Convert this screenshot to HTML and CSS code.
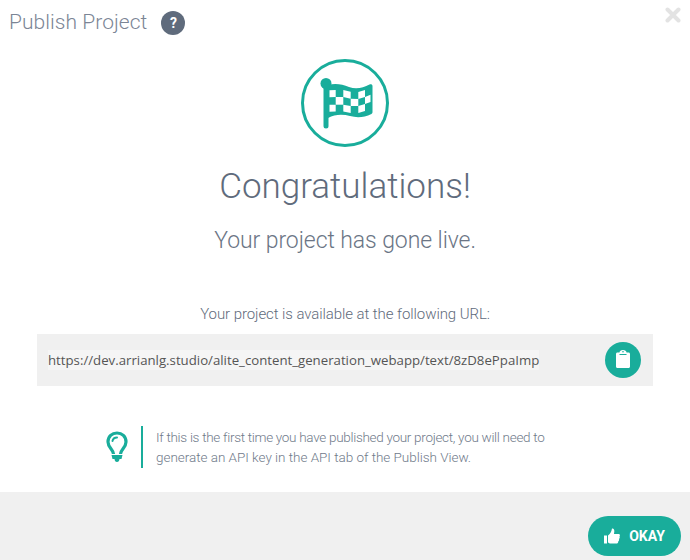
FILE: index.html
```html
<!DOCTYPE html>
<html lang="en">
<head>
    <meta charset="UTF-8">
    <meta name="viewport" content="width=device-width, initial-scale=1.0">
    <title>Publish Project</title>
    <link rel="stylesheet" href="styles.css">
</head>
<body>
    <div class="dialog">
        <div class="dialog-header">
            <h1 class="dialog-title">Publish Project</h1>
            <span class="help-badge">?</span>
            <svg class="close-icon" width="16" height="16" viewBox="0 0 16 16">
                <path d="M2.5 2.5 L13.5 13.5 M13.5 2.5 L2.5 13.5" stroke="#e3e3e3" stroke-width="4" stroke-linecap="round"/>
            </svg>
        </div>

        <div class="dialog-body">
            <svg class="flag-icon" width="88" height="88" viewBox="0 0 88 88">
                <circle cx="44" cy="44" r="42.500" fill="none" stroke="#19ad9b" stroke-width="3"/>
                <path d="M25 27 L25 67" stroke="#19ad9b" stroke-width="5" stroke-linecap="round"/>
                <circle cx="25" cy="24.500" r="5.500" fill="#19ad9b"/>
                <path d="M27 26 C34 24 41 25 48 28 C55 30.500 62 29 68.500 25.500 C70 25 71.500 25.500 71.500 27 L71.500 53 C71.500 54 71 54.500 70.500 55 C63 58.500 56 59 49 57 C42 55 34 55 27 59 Z" fill="#19ad9b"/>
                <g fill="#fff">
                    <path d="M28.500 31.300 L34.700 31 L34.700 38 L28.500 38.300 Z"/>
                    <path d="M42.300 31 L49.700 32.800 L49.700 39.800 L42.300 38 Z"/>
                    <path d="M57.300 33 L64 31 L64 38 L57.300 40 Z"/>
                    <path d="M34.700 38 L42.300 38 L42.300 45.700 L34.700 45.700 Z"/>
                    <path d="M49.700 39.800 L57.300 40 L57.300 47 L49.700 47 Z"/>
                    <path d="M64 38 L69.500 35.800 L69.500 43 L64 45 Z"/>
                    <path d="M28.500 45.800 L34.700 45.700 L34.700 52.500 L28.500 52.800 Z"/>
                    <path d="M42.300 45.700 L49.700 47 L49.700 54 L42.300 52.500 Z"/>
                    <path d="M57.300 47 L64 45 L64 52 L57.300 54 Z"/>
                </g>
            </svg>
            <h2 class="headline">Congratulations!</h2>
            <p class="subhead">Your project has gone live.</p>
            <p class="url-label">Your project is available at the following URL:</p>

            <div class="url-box">
                <span class="url-text">https://dev.arrianlg.studio/alite_content_generation_webapp/text/8zD8ePpaImp</span>
                <button class="copy-btn" aria-label="Copy URL">
                    <svg width="14" height="18" viewBox="0 0 14 18">
                        <path d="M3.500 2.500 C3.500 1 5 0 7 0 C9 0 10.500 1 10.500 2.500 L12.500 2.500 C13.400 2.500 14 3.100 14 4 L14 16.500 C14 17.400 13.400 18 12.500 18 L1.500 18 C0.600 18 0 17.400 0 16.500 L0 4 C0 3.100 0.600 2.500 1.500 2.500 Z" fill="#fff"/>
                        <path d="M3.500 4.500 L10.500 4.500" stroke="#19ad9b" stroke-width="1"/>
                        <circle cx="7" cy="1.800" r="0.800" fill="#19ad9b"/>
                    </svg>
                </button>
            </div>

            <div class="hint">
                <svg class="bulb-icon" width="24" height="32" viewBox="0 0 24 32">
                    <path d="M8.500 23 C8.500 18.500 3 16.500 3 11 C3 5.500 7 2 12 2 C17 2 21 5.500 21 11 C21 16.500 15.500 18.500 15.500 23" fill="none" stroke="#19ad9b" stroke-width="3.200"/>
                    <path d="M7.500 10 C8 7.500 9.500 6.500 12 6.500" fill="none" stroke="#19ad9b" stroke-width="2" stroke-linecap="round"/>
                    <path d="M6.500 24 L17.500 24 L16.500 28 L14.500 28 C14.300 30 13.500 31 12 31 C10.500 31 9.700 30 9.500 28 L7.500 28 Z" fill="#19ad9b"/>
                </svg>
                <p class="hint-text"><span class="hint-first">If this is the first time you have published your project, you will need to</span><br>generate an API key in the API tab of the Publish View.</p>
            </div>
        </div>

        <div class="dialog-footer">
            <button class="okay-btn">
                <svg width="16" height="16" viewBox="0 0 16 16">
                    <path d="M0 7.500 L3 7.500 L3 15.500 L0 15.500 Z" fill="#fff"/>
                    <path d="M4 7.500 C6 6 7.500 4 8 0.500 C9.500 0 10.500 1.500 10.300 3.500 L10 6 L14.500 6 C16 6 16.300 7.500 15.500 8.500 C16 9.500 15.700 10.500 15 11 C15.300 12 15 13 14.200 13.500 C14.300 14.700 13.500 15.500 12.500 15.500 L7 15.500 C5.500 15.500 4.800 15 4 14.500 Z" fill="#fff"/>
                </svg>
                OKAY
            </button>
        </div>
    </div>
</body>
</html>
```

FILE: styles.css
```css
/* General Page Styling */
body {
    margin: 0;
    padding: 0;
    background: #ffffff;
    font-family: Roboto, sans-serif;
    color: #5f6b7c;
}

h1, h2, p {
    margin: 0;
    font-weight: 300;
}

.dialog {
    display: flex;
    flex-direction: column;
    width: 690px;
    height: 560px;
    overflow: hidden;
}

/* Header */
.dialog-header {
    position: relative;
    display: flex;
    align-items: center;
    gap: 14px;
    height: 46px;
    padding-left: 9px;
}

.dialog-title {
    padding-bottom: 2px;
    font-size: 21px;
    letter-spacing: 0.05px;
    color: #7b8595;
}

.help-badge {
    display: flex;
    justify-content: center;
    align-items: center;
    width: 24px;
    height: 24px;
    border-radius: 50%;
    background: #5f6b7c;
    color: #ffffff;
    font-size: 14px;
    font-weight: 700;
}

.close-icon {
    position: absolute;
    top: 7px;
    right: 9px;
}

/* Body */
.dialog-body {
    flex: 1;
    display: flex;
    flex-direction: column;
    align-items: center;
    padding-top: 13px;
}

.headline {
    margin-top: 16px;
    font-size: 35px;
    line-height: 48px;
}

.subhead {
    margin-top: 14px;
    font-size: 23px;
    line-height: 32px;
    letter-spacing: -0.08px;
    color: #6b7585;
}

.url-label {
    margin-top: 46px;
    font-size: 15px;
    line-height: 22px;
    letter-spacing: -0.08px;
}

.url-box {
    display: flex;
    justify-content: space-between;
    align-items: center;
    box-sizing: border-box;
    width: 616px;
    height: 52px;
    margin-top: 9px;
    padding: 0 12px 0 11px;
    background: #f0f0f0;
}

.url-text {
    background: #f5f5f5;
    font-family: "Open Sans", sans-serif;
    font-size: 13.230px;
    line-height: 20px;
    color: #555555;
}

.copy-btn {
    display: flex;
    justify-content: center;
    align-items: center;
    box-sizing: border-box;
    width: 36px;
    height: 36px;
    padding: 0 0 3px;
    border: none;
    border-radius: 50%;
    background: #19ad9b;
}

.hint {
    display: flex;
    align-items: center;
    width: 480px;
    margin-top: 40px;
}

.bulb-icon {
    flex: none;
    margin-right: 12px;
}

.hint-text {
    padding: 1px 0 1px 13px;
    border-left: 2px solid #19ad9b;
    font-size: 13.500px;
    line-height: 20px;
    letter-spacing: -0.03px;
    color: #6f7a8a;
}

.hint-first {
    letter-spacing: -0.3px;
}

/* Footer */
.dialog-footer {
    display: flex;
    justify-content: flex-end;
    align-items: flex-end;
    box-sizing: border-box;
    height: 68px;
    padding: 0 9px 4px 0;
    background: #f0f0f0;
}

.okay-btn {
    display: flex;
    justify-content: center;
    align-items: center;
    gap: 9px;
    width: 93px;
    height: 40px;
    padding: 0;
    border: none;
    border-radius: 20px;
    background: #19ad9b;
    color: #ffffff;
    font-family: Roboto, sans-serif;
    font-size: 14px;
    font-weight: 700;
}
```
